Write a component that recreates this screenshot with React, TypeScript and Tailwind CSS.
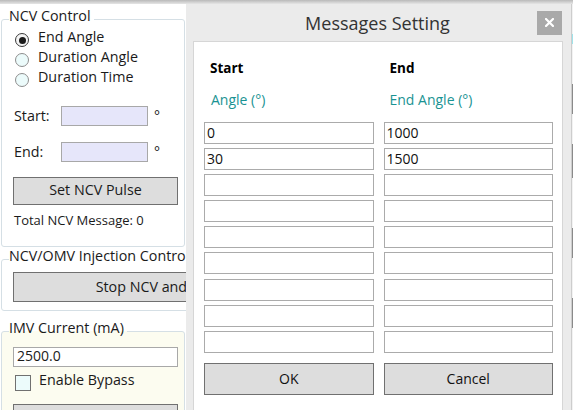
import React from "react";

function Radio({ label, checked }: { label: string; checked?: boolean }) {
  return (
    <div className="flex h-[20px] items-start">
      <div
        className={`ml-[2px] mt-[6px] flex h-[14px] w-[14px] shrink-0 items-center justify-center rounded-full border ${
          checked ? "border-[#3a3a3a] bg-[#f4f4f4]" : "border-[#8e8e8e] bg-[#ecfbfb]"
        }`}
      >
        {checked && <div className="h-[7px] w-[7px] rounded-full bg-[#1b1b1b]" />}
      </div>
      <span className="ml-[9px] whitespace-nowrap text-[14.3px] leading-[20px]">{label}</span>
    </div>
  );
}

function GroupLabel({ text, cream }: { text: string; cream?: boolean }) {
  return (
    <div
      className={`-mt-[13px] ml-[7px] w-fit whitespace-nowrap pr-[3px] text-[14.3px] leading-[18px] ${
        cream ? "bg-[linear-gradient(to_bottom,#ffffff_12px,#fcfcf0_12px)]" : "bg-white"
      }`}
    >
      {text}
    </div>
  );
}

function Field({ value }: { value?: string }) {
  return (
    <div className="h-[22px] border border-[#ababab] bg-white pl-[2px] text-[14px] leading-[20px] text-[#111111]">
      {value ?? ""}
    </div>
  );
}

export default function App() {
  const starts = ["0", "30", "", "", "", "", "", "", ""];
  const ends = ["1000", "1500", "", "", "", "", "", "", ""];
  return (
    <div className="flex h-[410px] w-[573px] flex-col overflow-hidden bg-white font-['Open_Sans',sans-serif] text-[#1a1a1a]">
      <div className="h-[4px] shrink-0 bg-gradient-to-b from-[#b9b9b9] to-[#e6e6e6]" />
      <div className="flex min-h-0 flex-1">
        {/* Left background panel */}
        <div className="w-[186px] shrink-0 overflow-hidden bg-white">
          {/* NCV Control */}
          <div className="ml-[1px] mt-[15px] w-[184px] rounded-[3px] border border-[#d5dfe5] pb-[17px]">
            <GroupLabel text="NCV Control" />
            <div className="pl-[11px]">
              <div className="mt-[2px]">
                <Radio label="End Angle" checked />
                <Radio label="Duration Angle" />
                <Radio label="Duration Time" />
              </div>
              <div className="mt-[19px] flex h-[20px] items-center">
                <span className="w-[48px] pl-[1px] text-[14.3px] leading-[20px]">Start:</span>
                <div className="h-[20px] w-[87px] border border-[#a8a8a8] bg-[#e6e6fa]" />
                <span className="ml-[6px] self-start text-[14px] leading-[20px]">°</span>
              </div>
              <div className="mt-[16px] flex h-[20px] items-center">
                <span className="w-[48px] pl-[1px] text-[14.3px] leading-[20px]">End:</span>
                <div className="h-[20px] w-[87px] border border-[#a8a8a8] bg-[#e6e6fa]" />
                <span className="ml-[6px] self-start text-[14px] leading-[20px]">°</span>
              </div>
              <div className="mt-[15px] flex h-[28px] w-[165px] items-center justify-center border border-[#707070] bg-[#dddddd] pb-[3px] text-[14.3px] leading-[20px]">
                Set NCV Pulse
              </div>
              <div className="mt-[6px] pl-[1px] text-[13px] leading-[18px]">Total NCV Message: 0</div>
            </div>
          </div>

          {/* NCV/OMV Injection Control */}
          <div className="ml-[1px] mt-[12px] w-[372px] rounded-[3px] border border-[#d5dfe5] pb-[8px]">
            <GroupLabel text="NCV/OMV Injection Control" />
            <div className="pl-[11px]">
              <div className="mt-[7px] flex h-[30px] w-[354px] items-center justify-center border border-[#707070] bg-[#dddddd] text-[14.3px] leading-[20px]">
                Stop NCV and OMV Injection
              </div>
            </div>
          </div>

          {/* IMV Current */}
          <div className="ml-[1px] mt-[20px] w-[184px] rounded-[3px] border border-[#d5dfe5] bg-[#fcfcf0] pb-[10px]">
            <GroupLabel text="IMV Current (mA)" cream />
            <div className="pl-[11px]">
              <div className="mt-[10px] h-[20px] w-[165px] border border-[#a8a8a8] bg-white pl-[3px] text-[14px] leading-[16px]">
                2500.0
              </div>
              <div className="mt-[3px] flex h-[20px] items-start">
                <div className="ml-[2px] mt-[5px] h-[16px] w-[16px] shrink-0 border border-[#707070] bg-[#ecfbfb]" />
                <span className="ml-[8px] text-[14.3px] leading-[20px]">Enable Bypass</span>
              </div>
              <div className="mt-[14px] h-[28px] w-[165px] border border-[#707070] bg-[#dddddd]" />
            </div>
          </div>
        </div>

        {/* Modal dialog */}
        <div className="flex w-[386px] shrink-0 flex-col border-r border-[#cdcdcd] bg-[#ebebeb]">
          <div className="grid h-[37px] shrink-0 grid-cols-[1fr_auto_1fr] items-center">
            <div />
            <div className="pr-[2px] text-[18px] leading-[24px] text-[#333333]">Messages Setting</div>
            <div className="flex justify-end pr-[9px]">
              <div className="flex h-[24px] w-[25px] items-center justify-center bg-[#a9a9a9]">
                <svg width="9" height="9" viewBox="0 0 9 9">
                  <path d="M1 1L8 8M8 1L1 8" stroke="#ffffff" strokeWidth="2.2" strokeLinecap="square" />
                </svg>
              </div>
            </div>
          </div>
          <div className="ml-[7px] w-[370px] flex-1 border-l border-r border-t border-[#d6d6d6] bg-white pl-[10px] pr-[9px] pt-[16px]">
            <div className="grid grid-cols-2 gap-x-[10px]">
              <div className="pl-[6px] text-[13.5px] font-bold leading-[20px] text-black">Start</div>
              <div className="pl-[6px] text-[13.5px] font-bold leading-[20px] text-black">End</div>
            </div>
            <div className="mt-[12px] grid grid-cols-2 gap-x-[10px]">
              <div className="pl-[7px] text-[14px] leading-[20px] text-[#1a9393]">Angle (°)</div>
              <div className="pl-[6px] text-[14px] leading-[20px] text-[#1a9393]">End Angle (°)</div>
            </div>
            <div className="mt-[12px] grid grid-cols-2 gap-x-[10px] gap-y-[4.1px]">
              {starts.map((s, i) => (
                <React.Fragment key={i}>
                  <Field value={s} />
                  <Field value={ends[i]} />
                </React.Fragment>
              ))}
            </div>
            <div className="mt-[10.5px] grid grid-cols-2 gap-x-[10px]">
              <div className="flex h-[32px] items-center justify-center border border-[#707070] bg-[#dddddd] text-[14px] leading-[20px] text-[#111111]">
                OK
              </div>
              <div className="flex h-[32px] items-center justify-center border border-[#707070] bg-[#dddddd] text-[14px] leading-[20px] text-[#111111]">
                Cancel
              </div>
            </div>
          </div>
        </div>

        {/* Sliver of the background app on the right */}
        <div className="flex w-[1px] shrink-0 flex-col bg-[#f2f2f2]">
          <div className="h-[30px]" />
          <div className="h-[10px] bg-[#9fe3ea]" />
          <div className="h-[40px]" />
          <div className="h-[30px] bg-[#8a8a8a]" />
          <div className="h-[30px]" />
          <div className="h-[34px] bg-[#8a8a8a]" />
          <div className="h-[50px]" />
          <div className="h-[30px] bg-[#8a8a8a]" />
          <div className="h-[40px]" />
          <div className="h-[30px] bg-[#8a8a8a]" />
        </div>
      </div>
    </div>
  );
}
